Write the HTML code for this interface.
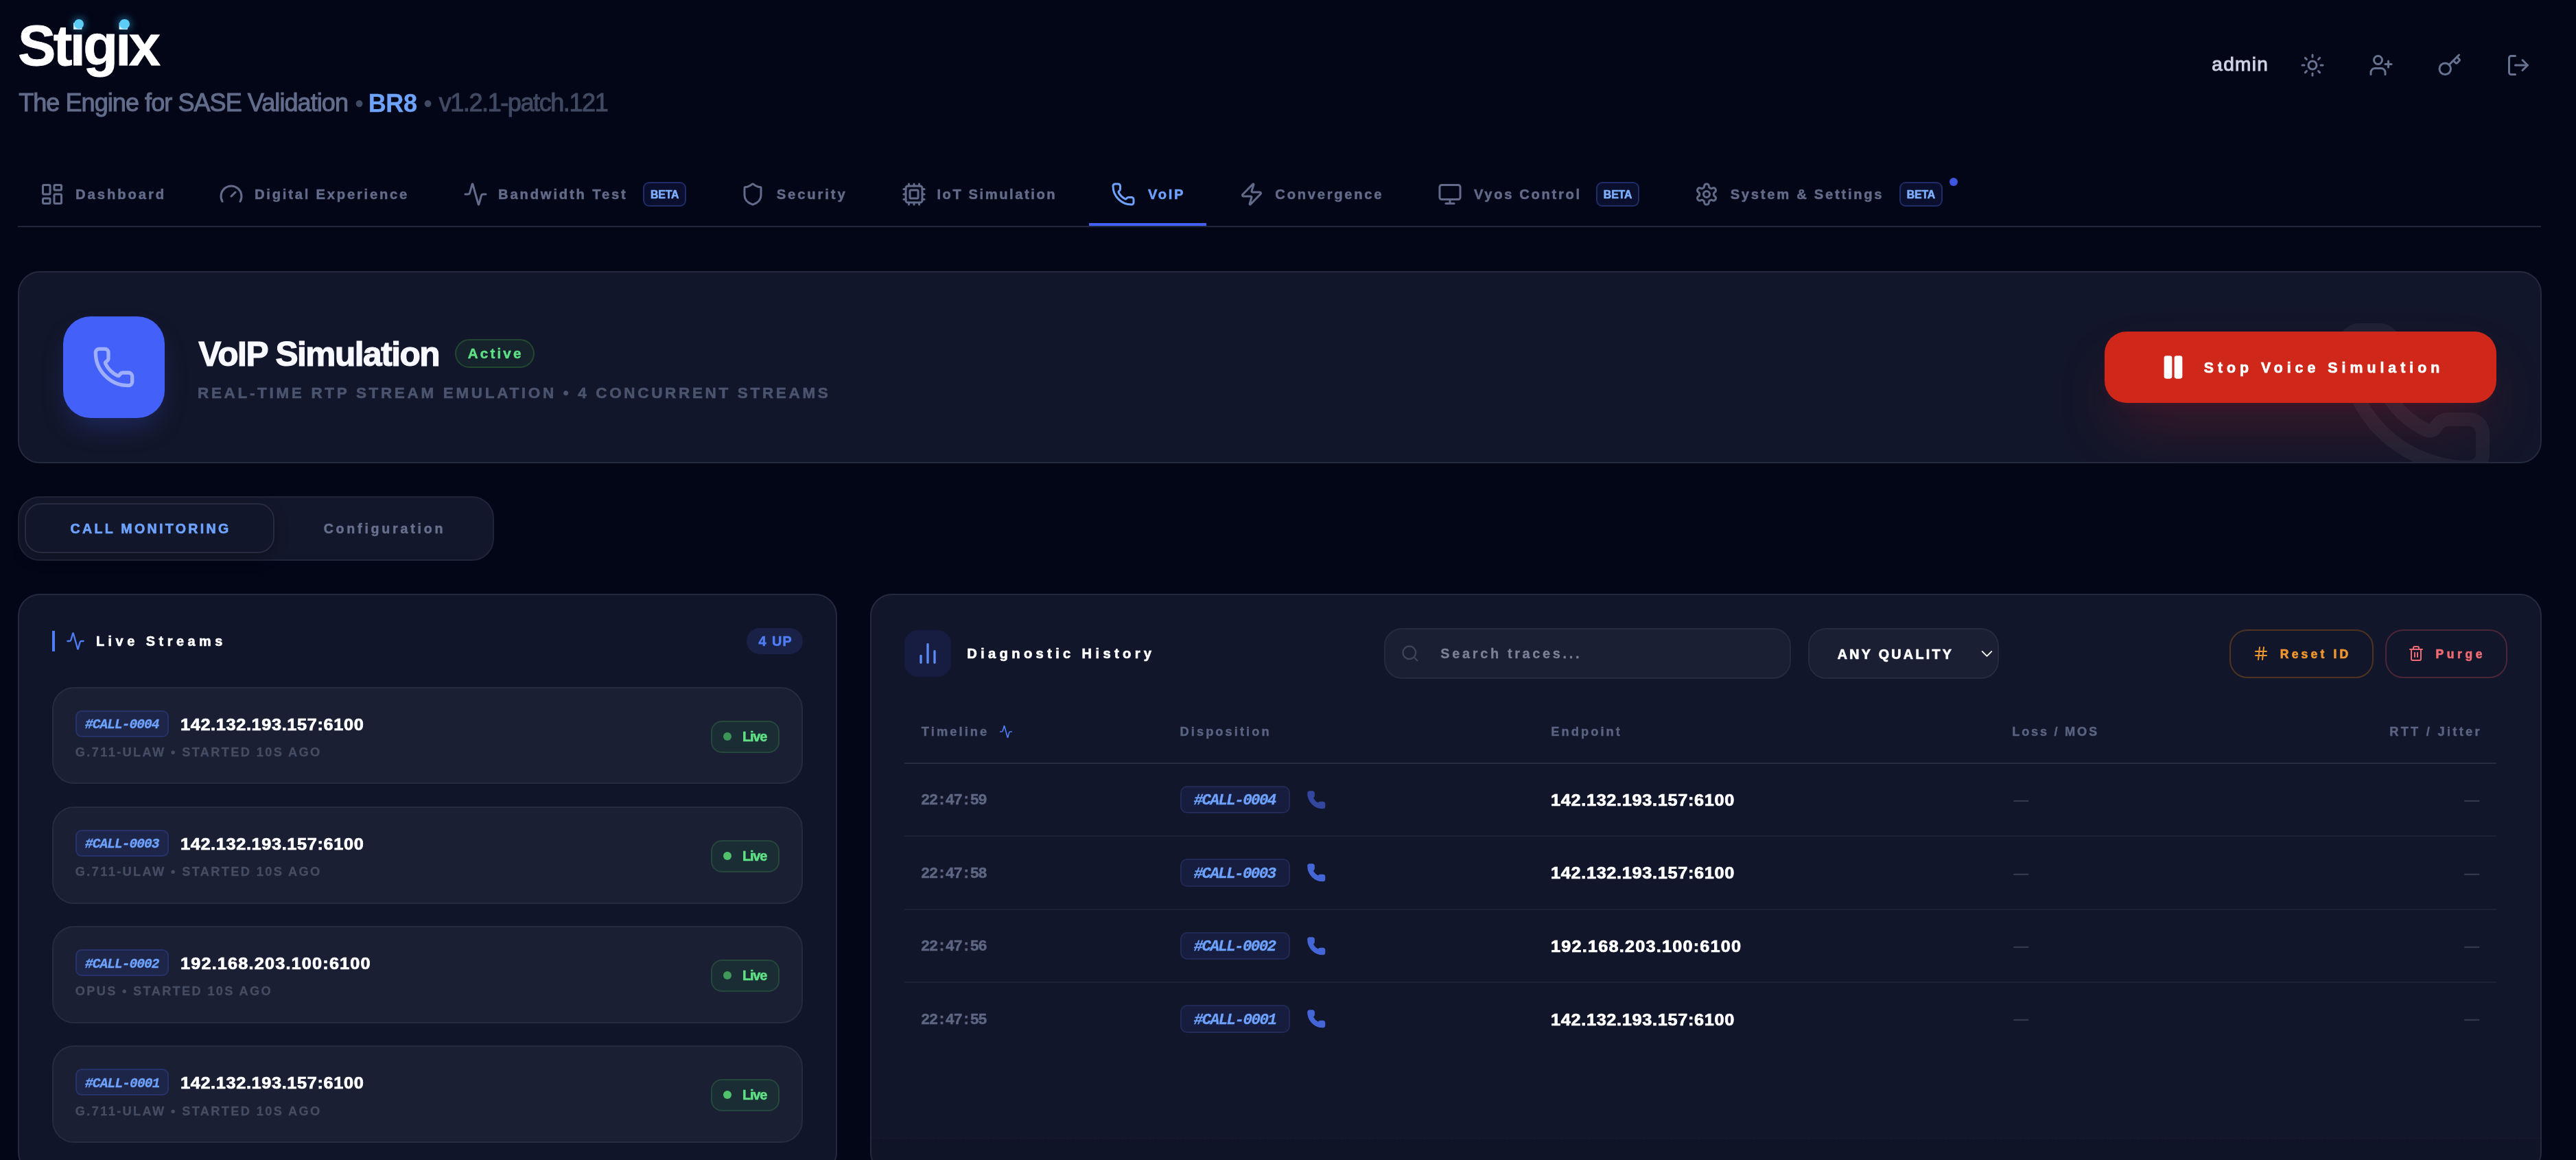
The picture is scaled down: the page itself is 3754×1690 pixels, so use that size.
<!DOCTYPE html>
<html lang="en"><head><meta charset="utf-8"><title>Stigix - VoIP Simulation</title>
<style>
*{margin:0;padding:0;box-sizing:border-box}
html,body{width:3754px;height:1690px;overflow:hidden;background:#030617}
body{position:relative;font-family:'Liberation Sans', sans-serif;-webkit-font-smoothing:antialiased}
.b{position:absolute}
.ic{position:absolute;display:block;overflow:visible}
.t{position:absolute;white-space:pre;font-weight:400;font-family:'Liberation Sans', sans-serif}
.m{font-family:'Liberation Mono', monospace}
.bd{font-weight:700}
.it{font-style:italic}
</style></head>
<body>
<div class="b" style="left:108.1px;top:27.8px;width:14.4px;height:14.4px;border-radius:8px;background:#5ccdf7;box-shadow:0 0 12px 2px rgba(56,189,248,.5);z-index:3;"></div>
<div class="b" style="left:174.20000000000002px;top:27.8px;width:14.4px;height:14.4px;border-radius:8px;background:#5ccdf7;box-shadow:0 0 12px 2px rgba(56,189,248,.5);z-index:3;"></div>
<svg class="ic" style="left:3352px;top:76.5px;width:36px;height:36px;color:#677190;" viewBox="0 0 24 24" fill="none" stroke="currentColor" stroke-width="2" stroke-linecap="round" stroke-linejoin="round"><circle cx="12" cy="12" r="4"/><path d="M12 2v2"/><path d="M12 20v2"/><path d="m4.930 4.930 1.410 1.410"/><path d="m17.660 17.660 1.410 1.410"/><path d="M2 12h2"/><path d="M20 12h2"/><path d="m6.340 17.660-1.410 1.410"/><path d="m19.070 4.930-1.410 1.410"/></svg>
<svg class="ic" style="left:3452px;top:76.5px;width:36px;height:36px;color:#677190;" viewBox="0 0 24 24" fill="none" stroke="currentColor" stroke-width="2" stroke-linecap="round" stroke-linejoin="round"><path d="M16 21v-2a4 4 0 0 0-4-4H6a4 4 0 0 0-4 4v2"/><circle cx="9" cy="7" r="4"/><line x1="19" x2="19" y1="8" y2="14"/><line x1="22" x2="16" y1="11" y2="11"/></svg>
<svg class="ic" style="left:3552px;top:76.5px;width:36px;height:36px;color:#677190;" viewBox="0 0 24 24" fill="none" stroke="currentColor" stroke-width="2" stroke-linecap="round" stroke-linejoin="round"><path d="m15.500 7.500 2.300 2.300a1 1 0 0 0 1.400 0l2.100-2.100a1 1 0 0 0 0-1.400L19 4"/><path d="m21 2-9.600 9.600"/><circle cx="7.500" cy="15.500" r="5.500"/></svg>
<svg class="ic" style="left:3652px;top:76.5px;width:36px;height:36px;color:#677190;" viewBox="0 0 24 24" fill="none" stroke="currentColor" stroke-width="2" stroke-linecap="round" stroke-linejoin="round"><path d="M9 21H5a2 2 0 0 1-2-2V5a2 2 0 0 1 2-2h4"/><polyline points="16 17 21 12 16 7"/><line x1="21" x2="9" y1="12" y2="12"/></svg>
<div class="b" style="left:26px;top:329px;width:3677px;height:2px;background:#20263b;"></div>
<div class="b" style="left:1587px;top:325px;width:171px;height:4px;background:#4361f5;"></div>
<svg class="ic" style="left:58px;top:265px;width:36px;height:36px;color:#626b89;" viewBox="0 0 24 24" fill="none" stroke="currentColor" stroke-width="2" stroke-linecap="round" stroke-linejoin="round"><rect x="3" y="3" width="7" height="9" rx="1"/><rect x="14" y="3" width="7" height="5" rx="1"/><rect x="14" y="12" width="7" height="9" rx="1"/><rect x="3" y="16" width="7" height="5" rx="1"/></svg>
<svg class="ic" style="left:318.5px;top:265px;width:36px;height:36px;color:#626b89;" viewBox="0 0 24 24" fill="none" stroke="currentColor" stroke-width="2" stroke-linecap="round" stroke-linejoin="round"><path d="m12 14 4-4"/><path d="M3.34 19a10 10 0 1 1 17.32 0"/></svg>
<svg class="ic" style="left:674.5px;top:265px;width:36px;height:36px;color:#626b89;" viewBox="0 0 24 24" fill="none" stroke="currentColor" stroke-width="2" stroke-linecap="round" stroke-linejoin="round"><path d="M22 12h-2.48a2 2 0 0 0-1.93 1.46l-2.35 8.36a.25.25 0 0 1-.48 0L9.24 2.18a.25.25 0 0 0-.48 0l-2.35 8.36A2 2 0 0 1 4.49 12H2"/></svg>
<svg class="ic" style="left:1079px;top:265px;width:36px;height:36px;color:#626b89;" viewBox="0 0 24 24" fill="none" stroke="currentColor" stroke-width="2" stroke-linecap="round" stroke-linejoin="round"><path d="M20 13c0 5-3.5 7.5-7.66 8.95a1 1 0 0 1-.67-.01C7.5 20.5 4 18 4 13V6a1 1 0 0 1 1-1c2 0 4.500-1.200 6.240-2.720a1.170 1.170 0 0 1 1.520 0C14.510 3.810 17 5 19 5a1 1 0 0 1 1 1z"/></svg>
<svg class="ic" style="left:1313.8px;top:265px;width:36px;height:36px;color:#626b89;" viewBox="0 0 24 24" fill="none" stroke="currentColor" stroke-width="2" stroke-linecap="round" stroke-linejoin="round"><path d="M12 20v2"/><path d="M12 2v2"/><path d="M17 20v2"/><path d="M17 2v2"/><path d="M2 12h2"/><path d="M2 17h2"/><path d="M2 7h2"/><path d="M20 12h2"/><path d="M20 17h2"/><path d="M20 7h2"/><path d="M7 20v2"/><path d="M7 2v2"/><rect x="4" y="4" width="16" height="16" rx="2"/><rect x="8" y="8" width="8" height="8" rx="1"/></svg>
<svg class="ic" style="left:1619px;top:265px;width:36px;height:36px;color:#6ea2ff;" viewBox="0 0 24 24" fill="none" stroke="currentColor" stroke-width="2" stroke-linecap="round" stroke-linejoin="round"><path d="M13.832 16.568a1 1 0 0 0 1.213-.303l.355-.465A2 2 0 0 1 17 15h3a2 2 0 0 1 2 2v3a2 2 0 0 1-2 2A18 18 0 0 1 2 4a2 2 0 0 1 2-2h3a2 2 0 0 1 2 2v3a2 2 0 0 1-.8 1.6l-.468.351a1 1 0 0 0-.292 1.233 14 14 0 0 0 6.392 6.384"/></svg>
<svg class="ic" style="left:1806px;top:265px;width:36px;height:36px;color:#626b89;" viewBox="0 0 24 24" fill="none" stroke="currentColor" stroke-width="2" stroke-linecap="round" stroke-linejoin="round"><path d="M4 14a1 1 0 0 1-.78-1.630l9.900-10.200a.5.5 0 0 1 .86.460l-1.920 6.020A1 1 0 0 0 13 10h7a1 1 0 0 1 .78 1.630l-9.900 10.200a.5.5 0 0 1-.86-.460l1.920-6.020A1 1 0 0 0 11 14z"/></svg>
<svg class="ic" style="left:2094.8px;top:265px;width:36px;height:36px;color:#626b89;" viewBox="0 0 24 24" fill="none" stroke="currentColor" stroke-width="2" stroke-linecap="round" stroke-linejoin="round"><rect width="20" height="14" x="2" y="3" rx="2"/><line x1="8" x2="16" y1="21" y2="21"/><line x1="12" x2="12" y1="17" y2="21"/></svg>
<svg class="ic" style="left:2468.6px;top:265px;width:36px;height:36px;color:#626b89;" viewBox="0 0 24 24" fill="none" stroke="currentColor" stroke-width="2" stroke-linecap="round" stroke-linejoin="round"><path d="M12.220 2h-.440a2 2 0 0 0-2 2v.180a2 2 0 0 1-1 1.730l-.430.250a2 2 0 0 1-2 0l-.150-.080a2 2 0 0 0-2.730.730l-.220.380a2 2 0 0 0 .730 2.730l.150.100a2 2 0 0 1 1 1.720v.510a2 2 0 0 1-1 1.740l-.150.090a2 2 0 0 0-.730 2.730l.220.380a2 2 0 0 0 2.730.730l.150-.080a2 2 0 0 1 2 0l.430.250a2 2 0 0 1 1 1.730V20a2 2 0 0 0 2 2h.440a2 2 0 0 0 2-2v-.180a2 2 0 0 1 1-1.730l.430-.250a2 2 0 0 1 2 0l.150.080a2 2 0 0 0 2.730-.730l.220-.390a2 2 0 0 0-.730-2.730l-.150-.080a2 2 0 0 1-1-1.740v-.500a2 2 0 0 1 1-1.740l.150-.090a2 2 0 0 0 .730-2.730l-.220-.380a2 2 0 0 0-2.730-.730l-.150.080a2 2 0 0 1-2 0l-.430-.250a2 2 0 0 1-1-1.730V4a2 2 0 0 0-2-2z"/><circle cx="12" cy="12" r="3"/></svg>
<div class="b" style="left:937.3px;top:265px;width:63px;height:36px;border-radius:9px;background:#0b0f2e;border:2px solid #1e2d66;"></div>
<div class="b" style="left:2326.2px;top:265px;width:63px;height:36px;border-radius:9px;background:#0b0f2e;border:2px solid #1e2d66;"></div>
<div class="b" style="left:2768px;top:265px;width:63px;height:36px;border-radius:9px;background:#0b0f2e;border:2px solid #1e2d66;"></div>
<div class="b" style="left:2840.9px;top:258.8px;width:12.4px;height:12.4px;border-radius:7px;background:#3d57e0;"></div>
<div class="b" style="left:26px;top:395px;width:3678px;height:279.5px;border-radius:32px;background:#12162a;border:2px solid #232a40;overflow:hidden;"><svg class="ic" style="left:3370px;top:64px;width:240px;height:240px;color:#ffffff;opacity:.05;" viewBox="0 0 24 24" fill="none" stroke="currentColor" stroke-width="2" stroke-linecap="round" stroke-linejoin="round"><path d="M13.832 16.568a1 1 0 0 0 1.213-.303l.355-.465A2 2 0 0 1 17 15h3a2 2 0 0 1 2 2v3a2 2 0 0 1-2 2A18 18 0 0 1 2 4a2 2 0 0 1 2-2h3a2 2 0 0 1 2 2v3a2 2 0 0 1-.8 1.6l-.468.351a1 1 0 0 0-.292 1.233 14 14 0 0 0 6.392 6.384"/></svg><div class="b" style="left:3039px;top:86px;width:571px;height:104px;border-radius:32px;background:#cf281b;box-shadow:0 44px 90px -22px rgba(225,40,40,.3),0 10px 24px -10px rgba(225,40,40,.12);"></div></div>
<div class="b" style="left:92px;top:461px;width:148px;height:148px;border-radius:40px;background:#4361f8;box-shadow:0 20px 44px -12px rgba(67,97,248,.3);"></div>
<svg class="ic" style="left:134px;top:503px;width:64px;height:64px;color:rgba(190,200,255,.75);" viewBox="0 0 24 24" fill="none" stroke="currentColor" stroke-width="2" stroke-linecap="round" stroke-linejoin="round"><path d="M13.832 16.568a1 1 0 0 0 1.213-.303l.355-.465A2 2 0 0 1 17 15h3a2 2 0 0 1 2 2v3a2 2 0 0 1-2 2A18 18 0 0 1 2 4a2 2 0 0 1 2-2h3a2 2 0 0 1 2 2v3a2 2 0 0 1-.8 1.6l-.468.351a1 1 0 0 0-.292 1.233 14 14 0 0 0 6.392 6.384"/></svg>
<div class="b" style="left:663px;top:494px;width:116px;height:42px;border-radius:21px;background:#16232d;border:2px solid #22472f;"></div>
<svg class="ic" style="left:3147px;top:515px;width:40px;height:40px;color:#ffffff;" viewBox="0 0 24 24" fill="currentColor" stroke="currentColor" stroke-width="2" stroke-linecap="round" stroke-linejoin="round"><rect x="14" y="3" width="5" height="18" rx="1"/><rect x="5" y="3" width="5" height="18" rx="1"/></svg>
<div class="b" style="left:26px;top:723px;width:694px;height:93.5px;border-radius:32px;background:#13172b;border:2px solid #1f2439;"></div>
<div class="b" style="left:36px;top:733px;width:364px;height:73px;border-radius:24px;background:#12162b;border:2px solid #262b41;box-shadow:0 8px 20px rgba(0,0,0,.25);"></div>
<div class="b" style="left:26px;top:865px;width:1193.5px;height:846px;border-radius:32px;background:#11152a;border:2px solid #232a40;"></div>
<div class="b" style="left:76px;top:919px;width:4.4px;height:30.3px;background:#4f7df5;"></div>
<svg class="ic" style="left:96px;top:920px;width:28px;height:28px;color:#4f7df5;" viewBox="0 0 24 24" fill="none" stroke="currentColor" stroke-width="2" stroke-linecap="round" stroke-linejoin="round"><path d="M22 12h-2.48a2 2 0 0 0-1.93 1.46l-2.35 8.36a.25.25 0 0 1-.48 0L9.24 2.18a.25.25 0 0 0-.48 0l-2.35 8.36A2 2 0 0 1 4.49 12H2"/></svg>
<div class="b" style="left:1088px;top:915px;width:82px;height:38px;border-radius:19px;background:#192146;"></div>
<div class="b" style="left:76px;top:1000.8px;width:1094px;height:141.7px;border-radius:32px;background:#1a1f33;border:2px solid #262b40;"></div>
<div class="b" style="left:110px;top:1035.0px;width:136px;height:38.5px;border-radius:9px;background:#1d2548;border:2px solid #27326a;"></div>
<div class="b" style="left:1036px;top:1050.0px;width:100px;height:46.5px;border-radius:16px;background:#1a2c34;border:2px solid #26473b;"></div>
<div class="b" style="left:1054px;top:1066.8px;width:12px;height:12px;border-radius:6px;background:#3d9457;"></div>
<div class="b" style="left:76px;top:1174.8999999999999px;width:1094px;height:141.7px;border-radius:32px;background:#1a1f33;border:2px solid #262b40;"></div>
<div class="b" style="left:110px;top:1209.1px;width:136px;height:38.5px;border-radius:9px;background:#1d2548;border:2px solid #27326a;"></div>
<div class="b" style="left:1036px;top:1224.1px;width:100px;height:46.5px;border-radius:16px;background:#1a2c34;border:2px solid #26473b;"></div>
<div class="b" style="left:1054px;top:1240.8999999999999px;width:12px;height:12px;border-radius:6px;background:#4fc26b;"></div>
<div class="b" style="left:76px;top:1349.0px;width:1094px;height:141.7px;border-radius:32px;background:#1a1f33;border:2px solid #262b40;"></div>
<div class="b" style="left:110px;top:1383.2px;width:136px;height:38.5px;border-radius:9px;background:#1d2548;border:2px solid #27326a;"></div>
<div class="b" style="left:1036px;top:1398.2px;width:100px;height:46.5px;border-radius:16px;background:#1a2c34;border:2px solid #26473b;"></div>
<div class="b" style="left:1054px;top:1415.0px;width:12px;height:12px;border-radius:6px;background:#40995a;"></div>
<div class="b" style="left:76px;top:1523.1px;width:1094px;height:141.7px;border-radius:32px;background:#1a1f33;border:2px solid #262b40;"></div>
<div class="b" style="left:110px;top:1557.3px;width:136px;height:38.5px;border-radius:9px;background:#1d2548;border:2px solid #27326a;"></div>
<div class="b" style="left:1036px;top:1572.3px;width:100px;height:46.5px;border-radius:16px;background:#1a2c34;border:2px solid #26473b;"></div>
<div class="b" style="left:1054px;top:1589.1px;width:12px;height:12px;border-radius:6px;background:#4fc26b;"></div>
<div class="b" style="left:1268px;top:865px;width:2436px;height:846px;border-radius:32px;background:#12162a;border:2px solid #232a40;"></div>
<div class="b" style="left:1270px;top:1657.5px;width:2432px;height:40px;background:rgba(3,6,23,.10);border-top:1px dashed rgba(255,255,255,.035);"></div>
<div class="b" style="left:1318px;top:918px;width:68px;height:68px;border-radius:20px;background:#171d40;"></div>
<svg class="ic" style="left:1332px;top:932px;width:40px;height:40px;color:#5b8cf7;" viewBox="0 0 24 24" fill="none" stroke="currentColor" stroke-width="2" stroke-linecap="round" stroke-linejoin="round"><line x1="18" x2="18" y1="20" y2="10"/><line x1="12" x2="12" y1="20" y2="4"/><line x1="6" x2="6" y1="20" y2="14"/></svg>
<div class="b" style="left:2017px;top:915px;width:593px;height:73.5px;border-radius:26px;background:#1a1f33;border:2px solid #252a3f;"></div>
<svg class="ic" style="left:2041px;top:938px;width:28px;height:28px;color:#3d455b;" viewBox="0 0 24 24" fill="none" stroke="currentColor" stroke-width="2" stroke-linecap="round" stroke-linejoin="round"><circle cx="11" cy="11" r="8"/><path d="m21 21-4.300-4.300"/></svg>
<div class="b" style="left:2635px;top:915px;width:277.5px;height:73.5px;border-radius:26px;background:#1a1f33;border:2px solid #252a3f;"></div>
<svg class="ic" style="left:2882.3px;top:938.7px;width:27px;height:27px;color:#ffffff;" viewBox="0 0 24 24" fill="none" stroke="currentColor" stroke-width="1.7" stroke-linecap="round" stroke-linejoin="round"><path d="m6 9 6 6 6-6"/></svg>
<div class="b" style="left:3249px;top:917px;width:210px;height:70.5px;border-radius:26px;border:2px solid #4d3320;"></div>
<svg class="ic" style="left:3283px;top:940px;width:24px;height:24px;color:#ef972f;" viewBox="0 0 24 24" fill="none" stroke="currentColor" stroke-width="2" stroke-linecap="round" stroke-linejoin="round"><line x1="4" x2="20" y1="9" y2="9"/><line x1="4" x2="20" y1="15" y2="15"/><line x1="10" x2="8" y1="3" y2="21"/><line x1="16" x2="14" y1="3" y2="21"/></svg>
<div class="b" style="left:3475.5px;top:917px;width:178.5px;height:70.5px;border-radius:26px;border:2px solid #4b2636;"></div>
<svg class="ic" style="left:3509px;top:940px;width:24px;height:24px;color:#ef6b73;" viewBox="0 0 24 24" fill="none" stroke="currentColor" stroke-width="2" stroke-linecap="round" stroke-linejoin="round"><path d="M3 6h18"/><path d="M19 6v14c0 1-1 2-2 2H7c-1 0-2-1-2-2V6"/><path d="M8 6V4c0-1 1-2 2-2h4c1 0 2 1 2 2v2"/><line x1="10" x2="10" y1="11" y2="17"/><line x1="14" x2="14" y1="11" y2="17"/></svg>
<svg class="ic" style="left:1456px;top:1056px;width:20px;height:20px;color:#4f7df5;" viewBox="0 0 24 24" fill="none" stroke="currentColor" stroke-width="2" stroke-linecap="round" stroke-linejoin="round"><path d="M22 12h-2.48a2 2 0 0 0-1.93 1.46l-2.35 8.36a.25.25 0 0 1-.48 0L9.24 2.18a.25.25 0 0 0-.48 0l-2.35 8.36A2 2 0 0 1 4.49 12H2"/></svg>
<div class="b" style="left:1318px;top:1111px;width:2320px;height:1.6px;background:#262b40;"></div>
<div class="b" style="left:1318px;top:1217.4px;width:2320px;height:1.8px;background:#1c2136;"></div>
<div class="b" style="left:1720.2px;top:1144.6px;width:159.6px;height:40.8px;border-radius:10px;background:#161d3f;border:2px solid #202a55;"></div>
<svg class="ic" style="left:1904px;top:1150.7px;width:28.5px;height:28.5px;color:#33479f;" viewBox="0 0 24 24" fill="currentColor" stroke="currentColor" stroke-width="2" stroke-linecap="round" stroke-linejoin="round"><path d="M13.832 16.568a1 1 0 0 0 1.213-.303l.355-.465A2 2 0 0 1 17 15h3a2 2 0 0 1 2 2v3a2 2 0 0 1-2 2A18 18 0 0 1 2 4a2 2 0 0 1 2-2h3a2 2 0 0 1 2 2v3a2 2 0 0 1-.8 1.6l-.468.351a1 1 0 0 0-.292 1.233 14 14 0 0 0 6.392 6.384"/></svg>
<div class="b" style="left:1318px;top:1323.9px;width:2320px;height:1.8px;background:#1c2136;"></div>
<div class="b" style="left:1720.2px;top:1251.1px;width:159.6px;height:40.8px;border-radius:10px;background:#161d3f;border:2px solid #202a55;"></div>
<svg class="ic" style="left:1904px;top:1257.2px;width:28.5px;height:28.5px;color:#4466d6;" viewBox="0 0 24 24" fill="currentColor" stroke="currentColor" stroke-width="2" stroke-linecap="round" stroke-linejoin="round"><path d="M13.832 16.568a1 1 0 0 0 1.213-.303l.355-.465A2 2 0 0 1 17 15h3a2 2 0 0 1 2 2v3a2 2 0 0 1-2 2A18 18 0 0 1 2 4a2 2 0 0 1 2-2h3a2 2 0 0 1 2 2v3a2 2 0 0 1-.8 1.6l-.468.351a1 1 0 0 0-.292 1.233 14 14 0 0 0 6.392 6.384"/></svg>
<div class="b" style="left:1318px;top:1430.4px;width:2320px;height:1.8px;background:#1c2136;"></div>
<div class="b" style="left:1720.2px;top:1357.6px;width:159.6px;height:40.8px;border-radius:10px;background:#161d3f;border:2px solid #202a55;"></div>
<svg class="ic" style="left:1904px;top:1363.7px;width:28.5px;height:28.5px;color:#4466d6;" viewBox="0 0 24 24" fill="currentColor" stroke="currentColor" stroke-width="2" stroke-linecap="round" stroke-linejoin="round"><path d="M13.832 16.568a1 1 0 0 0 1.213-.303l.355-.465A2 2 0 0 1 17 15h3a2 2 0 0 1 2 2v3a2 2 0 0 1-2 2A18 18 0 0 1 2 4a2 2 0 0 1 2-2h3a2 2 0 0 1 2 2v3a2 2 0 0 1-.8 1.6l-.468.351a1 1 0 0 0-.292 1.233 14 14 0 0 0 6.392 6.384"/></svg>
<div class="b" style="left:1720.2px;top:1464.1px;width:159.6px;height:40.8px;border-radius:10px;background:#161d3f;border:2px solid #202a55;"></div>
<svg class="ic" style="left:1904px;top:1470.2px;width:28.5px;height:28.5px;color:#4466d6;" viewBox="0 0 24 24" fill="currentColor" stroke="currentColor" stroke-width="2" stroke-linecap="round" stroke-linejoin="round"><path d="M13.832 16.568a1 1 0 0 0 1.213-.303l.355-.465A2 2 0 0 1 17 15h3a2 2 0 0 1 2 2v3a2 2 0 0 1-2 2A18 18 0 0 1 2 4a2 2 0 0 1 2-2h3a2 2 0 0 1 2 2v3a2 2 0 0 1-.8 1.6l-.468.351a1 1 0 0 0-.292 1.233 14 14 0 0 0 6.392 6.384"/></svg>
<div class="b" id="txt" style="left:0;top:0;width:3754px;height:1690px;will-change:transform">
<span class="t bd" style="left:26.00px;top:25px;font-size:83px;line-height:83px;color:#ffffff;letter-spacing:-3.600px;-webkit-text-stroke:0.8px currentColor;">Stigix</span>
<span class="t" style="left:27.17px;top:132px;font-size:36px;line-height:36px;color:#626d8c;letter-spacing:-0.925px;-webkit-text-stroke:1.0px currentColor;">The Engine for SASE Validation</span>
<span class="t" style="left:517.37px;top:133px;font-size:36px;line-height:36px;color:#414a63;">•</span>
<span class="t bd" style="left:536.67px;top:133px;font-size:36px;line-height:36px;color:#6ea2ff;letter-spacing:-0.333px;-webkit-text-stroke:0.3px currentColor;">BR8</span>
<span class="t" style="left:617.37px;top:133px;font-size:36px;line-height:36px;color:#414a63;">•</span>
<span class="t" style="left:639.67px;top:132px;font-size:36px;line-height:36px;color:#414a63;letter-spacing:-1.411px;-webkit-text-stroke:1.0px currentColor;">v1.2.1-patch.121</span>
<span class="t" style="left:3223.33px;top:80px;font-size:28px;line-height:28px;color:#cdd2e4;letter-spacing:1.317px;-webkit-text-stroke:1.0px currentColor;">admin</span>
<span class="t bd" style="left:110.00px;top:273px;font-size:20.2px;line-height:20.2px;color:#626b89;letter-spacing:2.958px;-webkit-text-stroke:0.5px currentColor;">Dashboard</span>
<span class="t bd" style="left:371.00px;top:273px;font-size:20.2px;line-height:20.2px;color:#626b89;letter-spacing:2.784px;-webkit-text-stroke:0.5px currentColor;">Digital Experience</span>
<span class="t bd" style="left:726.00px;top:273px;font-size:20.2px;line-height:20.2px;color:#626b89;letter-spacing:2.846px;-webkit-text-stroke:0.5px currentColor;">Bandwidth Test</span>
<span class="t bd" style="left:1131.67px;top:273px;font-size:20.2px;line-height:20.2px;color:#626b89;letter-spacing:2.905px;-webkit-text-stroke:0.5px currentColor;">Security</span>
<span class="t bd" style="left:1365.40px;top:273px;font-size:20.2px;line-height:20.2px;color:#626b89;letter-spacing:2.554px;-webkit-text-stroke:0.5px currentColor;">IoT Simulation</span>
<span class="t bd" style="left:1673.00px;top:273px;font-size:20.2px;line-height:20.2px;color:#6ea2ff;letter-spacing:2.667px;-webkit-text-stroke:0.5px currentColor;">VoIP</span>
<span class="t bd" style="left:1858.33px;top:273px;font-size:20.2px;line-height:20.2px;color:#626b89;letter-spacing:2.733px;-webkit-text-stroke:0.5px currentColor;">Convergence</span>
<span class="t bd" style="left:2148.00px;top:273px;font-size:20.2px;line-height:20.2px;color:#626b89;letter-spacing:2.648px;-webkit-text-stroke:0.5px currentColor;">Vyos Control</span>
<span class="t bd" style="left:2521.67px;top:273px;font-size:20.2px;line-height:20.2px;color:#626b89;letter-spacing:2.729px;-webkit-text-stroke:0.5px currentColor;">System &amp; Settings</span>
<span class="t bd" style="left:947.93px;top:276px;font-size:15.8px;line-height:15.8px;color:#7eb0ff;letter-spacing:-0.078px;-webkit-text-stroke:0.6px currentColor;">BETA</span>
<span class="t bd" style="left:2336.83px;top:276px;font-size:15.8px;line-height:15.8px;color:#7eb0ff;letter-spacing:-0.078px;-webkit-text-stroke:0.6px currentColor;">BETA</span>
<span class="t bd" style="left:2778.63px;top:276px;font-size:15.8px;line-height:15.8px;color:#7eb0ff;letter-spacing:-0.078px;-webkit-text-stroke:0.6px currentColor;">BETA</span>
<span class="t bd" style="left:289.33px;top:492px;font-size:49.6px;line-height:49.6px;color:#f8f8ff;letter-spacing:-1.471px;-webkit-text-stroke:1.2px currentColor;">VoIP Simulation</span>
<span class="t bd" style="left:681.67px;top:505px;font-size:20.6px;line-height:20.6px;color:#5fe085;letter-spacing:3.200px;-webkit-text-stroke:0.5px currentColor;">Active</span>
<span class="t bd" style="left:288.00px;top:562px;font-size:22.5px;line-height:22.5px;color:#4b546e;letter-spacing:3.664px;-webkit-text-stroke:0.6px currentColor;">REAL-TIME RTP STREAM EMULATION • 4 CONCURRENT STREAMS</span>
<span class="t bd" style="left:3211.67px;top:526px;font-size:21.3px;line-height:21.3px;color:#ffffff;letter-spacing:6.020px;-webkit-text-stroke:0.7px currentColor;">Stop Voice Simulation</span>
<span class="t bd" style="left:102.47px;top:761px;font-size:19.6px;line-height:19.6px;color:#6ea2ff;letter-spacing:3.314px;-webkit-text-stroke:0.6px currentColor;">CALL MONITORING</span>
<span class="t bd" style="left:471.63px;top:761px;font-size:19.6px;line-height:19.6px;color:#66708e;letter-spacing:3.786px;-webkit-text-stroke:0.5px currentColor;">Configuration</span>
<span class="t bd" style="left:139.90px;top:925px;font-size:19.8px;line-height:19.8px;color:#ffffff;letter-spacing:5.558px;-webkit-text-stroke:0.6px currentColor;">Live Streams</span>
<span class="t bd" style="left:1105.60px;top:925px;font-size:19.8px;line-height:19.8px;color:#4f7df3;letter-spacing:1.411px;-webkit-text-stroke:0.6px currentColor;">4 UP</span>
<span class="t m bd it" style="left:124.00px;top:1047px;font-size:19.5px;line-height:19.5px;color:#6ea2ff;letter-spacing:-0.963px;-webkit-text-stroke:0.3px currentColor;">#CALL-0004</span>
<span class="t bd" style="left:262.60px;top:1045px;font-size:23px;line-height:23px;color:#ffffff;letter-spacing:0.579px;-webkit-text-stroke:0.7px currentColor;transform:scaleX(1.1);transform-origin:0 50%;">142.132.193.157:6100</span>
<span class="t bd" style="left:109.73px;top:1087px;font-size:18.2px;line-height:18.2px;color:#454d64;letter-spacing:2.374px;-webkit-text-stroke:0.3px currentColor;">G.711-ULAW • STARTED 10S AGO</span>
<span class="t bd" style="left:1082.00px;top:1064px;font-size:19.8px;line-height:19.8px;color:#5fe085;letter-spacing:-1.111px;-webkit-text-stroke:0.6px currentColor;">Live</span>
<span class="t m bd it" style="left:124.00px;top:1221px;font-size:19.5px;line-height:19.5px;color:#6ea2ff;letter-spacing:-0.963px;-webkit-text-stroke:0.3px currentColor;">#CALL-0003</span>
<span class="t bd" style="left:262.60px;top:1219px;font-size:23px;line-height:23px;color:#ffffff;letter-spacing:0.579px;-webkit-text-stroke:0.7px currentColor;transform:scaleX(1.1);transform-origin:0 50%;">142.132.193.157:6100</span>
<span class="t bd" style="left:109.73px;top:1261px;font-size:18.2px;line-height:18.2px;color:#454d64;letter-spacing:2.374px;-webkit-text-stroke:0.3px currentColor;">G.711-ULAW • STARTED 10S AGO</span>
<span class="t bd" style="left:1082.00px;top:1238px;font-size:19.8px;line-height:19.8px;color:#5fe085;letter-spacing:-1.111px;-webkit-text-stroke:0.6px currentColor;">Live</span>
<span class="t m bd it" style="left:124.00px;top:1396px;font-size:19.5px;line-height:19.5px;color:#6ea2ff;letter-spacing:-0.963px;-webkit-text-stroke:0.3px currentColor;">#CALL-0002</span>
<span class="t bd" style="left:262.60px;top:1393px;font-size:23px;line-height:23px;color:#ffffff;letter-spacing:1.053px;-webkit-text-stroke:0.7px currentColor;transform:scaleX(1.1);transform-origin:0 50%;">192.168.203.100:6100</span>
<span class="t bd" style="left:109.73px;top:1435px;font-size:18.2px;line-height:18.2px;color:#454d64;letter-spacing:2.337px;-webkit-text-stroke:0.3px currentColor;">OPUS • STARTED 10S AGO</span>
<span class="t bd" style="left:1082.00px;top:1412px;font-size:19.8px;line-height:19.8px;color:#5fe085;letter-spacing:-1.111px;-webkit-text-stroke:0.6px currentColor;">Live</span>
<span class="t m bd it" style="left:124.00px;top:1570px;font-size:19.5px;line-height:19.5px;color:#6ea2ff;letter-spacing:-0.852px;-webkit-text-stroke:0.3px currentColor;">#CALL-0001</span>
<span class="t bd" style="left:262.60px;top:1567px;font-size:23px;line-height:23px;color:#ffffff;letter-spacing:0.579px;-webkit-text-stroke:0.7px currentColor;transform:scaleX(1.1);transform-origin:0 50%;">142.132.193.157:6100</span>
<span class="t bd" style="left:109.73px;top:1610px;font-size:18.2px;line-height:18.2px;color:#454d64;letter-spacing:2.374px;-webkit-text-stroke:0.3px currentColor;">G.711-ULAW • STARTED 10S AGO</span>
<span class="t bd" style="left:1082.00px;top:1586px;font-size:19.8px;line-height:19.8px;color:#5fe085;letter-spacing:-1.111px;-webkit-text-stroke:0.6px currentColor;">Live</span>
<span class="t bd" style="left:1409.20px;top:942px;font-size:20.2px;line-height:20.2px;color:#ffffff;letter-spacing:5.325px;-webkit-text-stroke:0.6px currentColor;">Diagnostic History</span>
<span class="t bd" style="left:2099.37px;top:943px;font-size:19.9px;line-height:19.9px;color:#7b8198;letter-spacing:3.669px;-webkit-text-stroke:0.3px currentColor;">Search traces...</span>
<span class="t bd" style="left:2677.80px;top:944px;font-size:19.7px;line-height:19.7px;color:#ffffff;letter-spacing:3.307px;-webkit-text-stroke:0.7px currentColor;">ANY QUALITY</span>
<span class="t bd" style="left:3322.83px;top:945px;font-size:17.5px;line-height:17.5px;color:#ef972f;letter-spacing:4.200px;-webkit-text-stroke:0.6px currentColor;">Reset ID</span>
<span class="t bd" style="left:3549.43px;top:945px;font-size:17.5px;line-height:17.5px;color:#ef6b73;letter-spacing:4.608px;-webkit-text-stroke:0.6px currentColor;">Purge</span>
<span class="t bd" style="left:1342.80px;top:1057px;font-size:18.3px;line-height:18.3px;color:#5a6482;letter-spacing:3.095px;-webkit-text-stroke:0.4px currentColor;">Timeline</span>
<span class="t bd" style="left:1719.50px;top:1057px;font-size:18.3px;line-height:18.3px;color:#5a6482;letter-spacing:3.063px;-webkit-text-stroke:0.4px currentColor;">Disposition</span>
<span class="t bd" style="left:2260.20px;top:1057px;font-size:18.3px;line-height:18.3px;color:#5a6482;letter-spacing:3.067px;-webkit-text-stroke:0.4px currentColor;">Endpoint</span>
<span class="t bd" style="left:2932.30px;top:1057px;font-size:18.3px;line-height:18.3px;color:#5a6482;letter-spacing:2.700px;-webkit-text-stroke:0.4px currentColor;">Loss / MOS</span>
<span class="t bd" style="left:3482.20px;top:1057px;font-size:18.3px;line-height:18.3px;color:#5a6482;letter-spacing:3.261px;-webkit-text-stroke:0.4px currentColor;">RTT / Jitter</span>
<span class="t m bd" style="left:1341.80px;top:1155px;font-size:22.5px;line-height:22.5px;color:#5d6682;letter-spacing:-1.571px;-webkit-text-stroke:0.4px currentColor;">22:47:59</span>
<span class="t m bd it" style="left:1739.70px;top:1155px;font-size:22.5px;line-height:22.5px;color:#6ea2ff;letter-spacing:-1.593px;-webkit-text-stroke:0.3px currentColor;">#CALL-0004</span>
<span class="t bd" style="left:2260.10px;top:1155px;font-size:23px;line-height:23px;color:#ffffff;letter-spacing:0.603px;-webkit-text-stroke:0.7px currentColor;transform:scaleX(1.1);transform-origin:0 50%;">142.132.193.157:6100</span>
<span class="t bd" style="left:2934.30px;top:1155px;font-size:22px;line-height:22px;color:#323850;">—</span>
<span class="t bd" style="left:3591.30px;top:1155px;font-size:22px;line-height:22px;color:#323850;">—</span>
<span class="t m bd" style="left:1341.80px;top:1262px;font-size:22.5px;line-height:22.5px;color:#5d6682;letter-spacing:-1.571px;-webkit-text-stroke:0.4px currentColor;">22:47:58</span>
<span class="t m bd it" style="left:1739.70px;top:1262px;font-size:22.5px;line-height:22.5px;color:#6ea2ff;letter-spacing:-1.630px;-webkit-text-stroke:0.3px currentColor;">#CALL-0003</span>
<span class="t bd" style="left:2260.10px;top:1261px;font-size:23px;line-height:23px;color:#ffffff;letter-spacing:0.603px;-webkit-text-stroke:0.7px currentColor;transform:scaleX(1.1);transform-origin:0 50%;">142.132.193.157:6100</span>
<span class="t bd" style="left:2934.30px;top:1262px;font-size:22px;line-height:22px;color:#323850;">—</span>
<span class="t bd" style="left:3591.30px;top:1262px;font-size:22px;line-height:22px;color:#323850;">—</span>
<span class="t m bd" style="left:1341.80px;top:1368px;font-size:22.5px;line-height:22.5px;color:#5d6682;letter-spacing:-1.571px;-webkit-text-stroke:0.4px currentColor;">22:47:56</span>
<span class="t m bd it" style="left:1739.70px;top:1368px;font-size:22.5px;line-height:22.5px;color:#6ea2ff;letter-spacing:-1.630px;-webkit-text-stroke:0.3px currentColor;">#CALL-0002</span>
<span class="t bd" style="left:2260.10px;top:1368px;font-size:23px;line-height:23px;color:#ffffff;letter-spacing:1.077px;-webkit-text-stroke:0.7px currentColor;transform:scaleX(1.1);transform-origin:0 50%;">192.168.203.100:6100</span>
<span class="t bd" style="left:2934.30px;top:1368px;font-size:22px;line-height:22px;color:#323850;">—</span>
<span class="t bd" style="left:3591.30px;top:1368px;font-size:22px;line-height:22px;color:#323850;">—</span>
<span class="t m bd" style="left:1341.80px;top:1475px;font-size:22.5px;line-height:22.5px;color:#5d6682;letter-spacing:-1.571px;-webkit-text-stroke:0.4px currentColor;">22:47:55</span>
<span class="t m bd it" style="left:1739.70px;top:1475px;font-size:22.5px;line-height:22.5px;color:#6ea2ff;letter-spacing:-1.519px;-webkit-text-stroke:0.3px currentColor;">#CALL-0001</span>
<span class="t bd" style="left:2260.10px;top:1475px;font-size:23px;line-height:23px;color:#ffffff;letter-spacing:0.603px;-webkit-text-stroke:0.7px currentColor;transform:scaleX(1.1);transform-origin:0 50%;">142.132.193.157:6100</span>
<span class="t bd" style="left:2934.30px;top:1474px;font-size:22px;line-height:22px;color:#323850;">—</span>
<span class="t bd" style="left:3591.30px;top:1474px;font-size:22px;line-height:22px;color:#323850;">—</span>
</div>
</body></html>
